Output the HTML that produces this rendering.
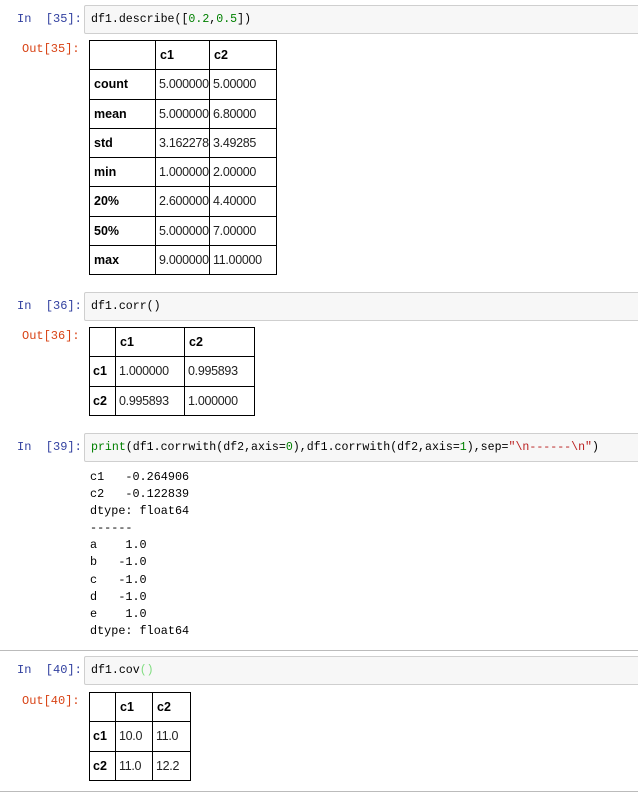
<!DOCTYPE html>
<html><head><meta charset="utf-8"><style>
body{margin:0;width:638px;height:795px;background:#fff;position:relative;overflow:hidden;font-family:"Liberation Mono","Noto Sans CJK SC",monospace;}
.lbl{position:absolute;font-size:12px;line-height:14px;white-space:pre;}
.in{color:#303F9F}.out{color:#D84315}
.cell{position:absolute;left:84px;width:560px;height:29px;background:#f7f7f7;border:1px solid #cfcfcf;border-radius:2px;box-sizing:border-box;font-size:11.6px;line-height:27px;padding-left:6px;white-space:pre;color:#000}
.g{color:#008000}.r{color:#BA2121}.gl{color:#7fdd7f}
table{position:absolute;border-collapse:collapse;font-family:"Liberation Sans",Arial,sans-serif;font-size:12.5px;table-layout:fixed}
td,th{border:1px solid #000;padding:0 0 0 4px;text-align:left;height:29.25px;box-sizing:border-box;white-space:nowrap;overflow:hidden}
th{font-weight:bold}
td{color:#222;padding-left:3px;font-size:12.5px;letter-spacing:-0.3px}
pre{position:absolute;margin:0;font-family:"Liberation Mono","Noto Sans CJK SC",monospace;font-size:11.8px;line-height:17.1px;color:#000}
.hr{position:absolute;left:0;width:638px;height:1px;background:#bbb}
</style></head><body>
<div class="lbl in" style="left:17px;top:12px">In  [35]:</div>
<div class="cell" style="top:5px">df1.describe([<span class="g">0.2</span>,<span class="g">0.5</span>])</div>
<div class="lbl out" style="left:22px;top:42px">Out[35]:</div>
<table style="left:89px;top:40px;width:188px">
<colgroup><col style="width:66px"><col style="width:54px"><col style="width:67px"></colgroup>
<tr><th></th><th>c1</th><th>c2</th></tr>
<tr><th>count</th><td>5.000000</td><td>5.00000</td></tr>
<tr><th>mean</th><td>5.000000</td><td>6.80000</td></tr>
<tr><th>std</th><td>3.162278</td><td>3.49285</td></tr>
<tr><th>min</th><td>1.000000</td><td>2.00000</td></tr>
<tr><th>20%</th><td>2.600000</td><td>4.40000</td></tr>
<tr><th>50%</th><td>5.000000</td><td>7.00000</td></tr>
<tr><th>max</th><td>9.000000</td><td>11.00000</td></tr>
</table>

<div class="lbl in" style="left:17px;top:299px">In  [36]:</div>
<div class="cell" style="top:292px">df1.corr()</div>
<div class="lbl out" style="left:22px;top:329px">Out[36]:</div>
<table style="left:89px;top:327px;width:165px">
<colgroup><col style="width:26px"><col style="width:69px"><col style="width:70px"></colgroup>
<tr><th></th><th>c1</th><th>c2</th></tr>
<tr><th style="padding-left:3px">c1</th><td>1.000000</td><td>0.995893</td></tr>
<tr><th style="padding-left:3px">c2</th><td>0.995893</td><td>1.000000</td></tr>
</table>

<div class="lbl in" style="left:17px;top:440px">In  [39]:</div>
<div class="cell" style="top:433px"><span class="g">print</span>(df1.corrwith(df2,axis=<span class="g">0</span>),df1.corrwith(df2,axis=<span class="g">1</span>),sep=<span class="r">"\n------\n"</span>)</div>
<pre style="left:90px;top:469px">c1   -0.264906
c2   -0.122839
dtype: float64
------
a    1.0
b   -1.0
c   -1.0
d   -1.0
e    1.0
dtype: float64</pre>

<div class="hr" style="top:650px"></div>
<div class="lbl in" style="left:17px;top:663px">In  [40]:</div>
<div class="cell" style="top:656px">df1.cov<span class="gl">()</span></div>
<div class="lbl out" style="left:22px;top:694px">Out[40]:</div>
<table style="left:89px;top:692px;width:101px">
<colgroup><col style="width:26px"><col style="width:37px"><col style="width:38px"></colgroup>
<tr><th></th><th>c1</th><th>c2</th></tr>
<tr><th style="padding-left:3px">c1</th><td>10.0</td><td>11.0</td></tr>
<tr><th style="padding-left:3px">c2</th><td>11.0</td><td>12.2</td></tr>
</table>
<div class="hr" style="top:791px"></div>
</body></html>
